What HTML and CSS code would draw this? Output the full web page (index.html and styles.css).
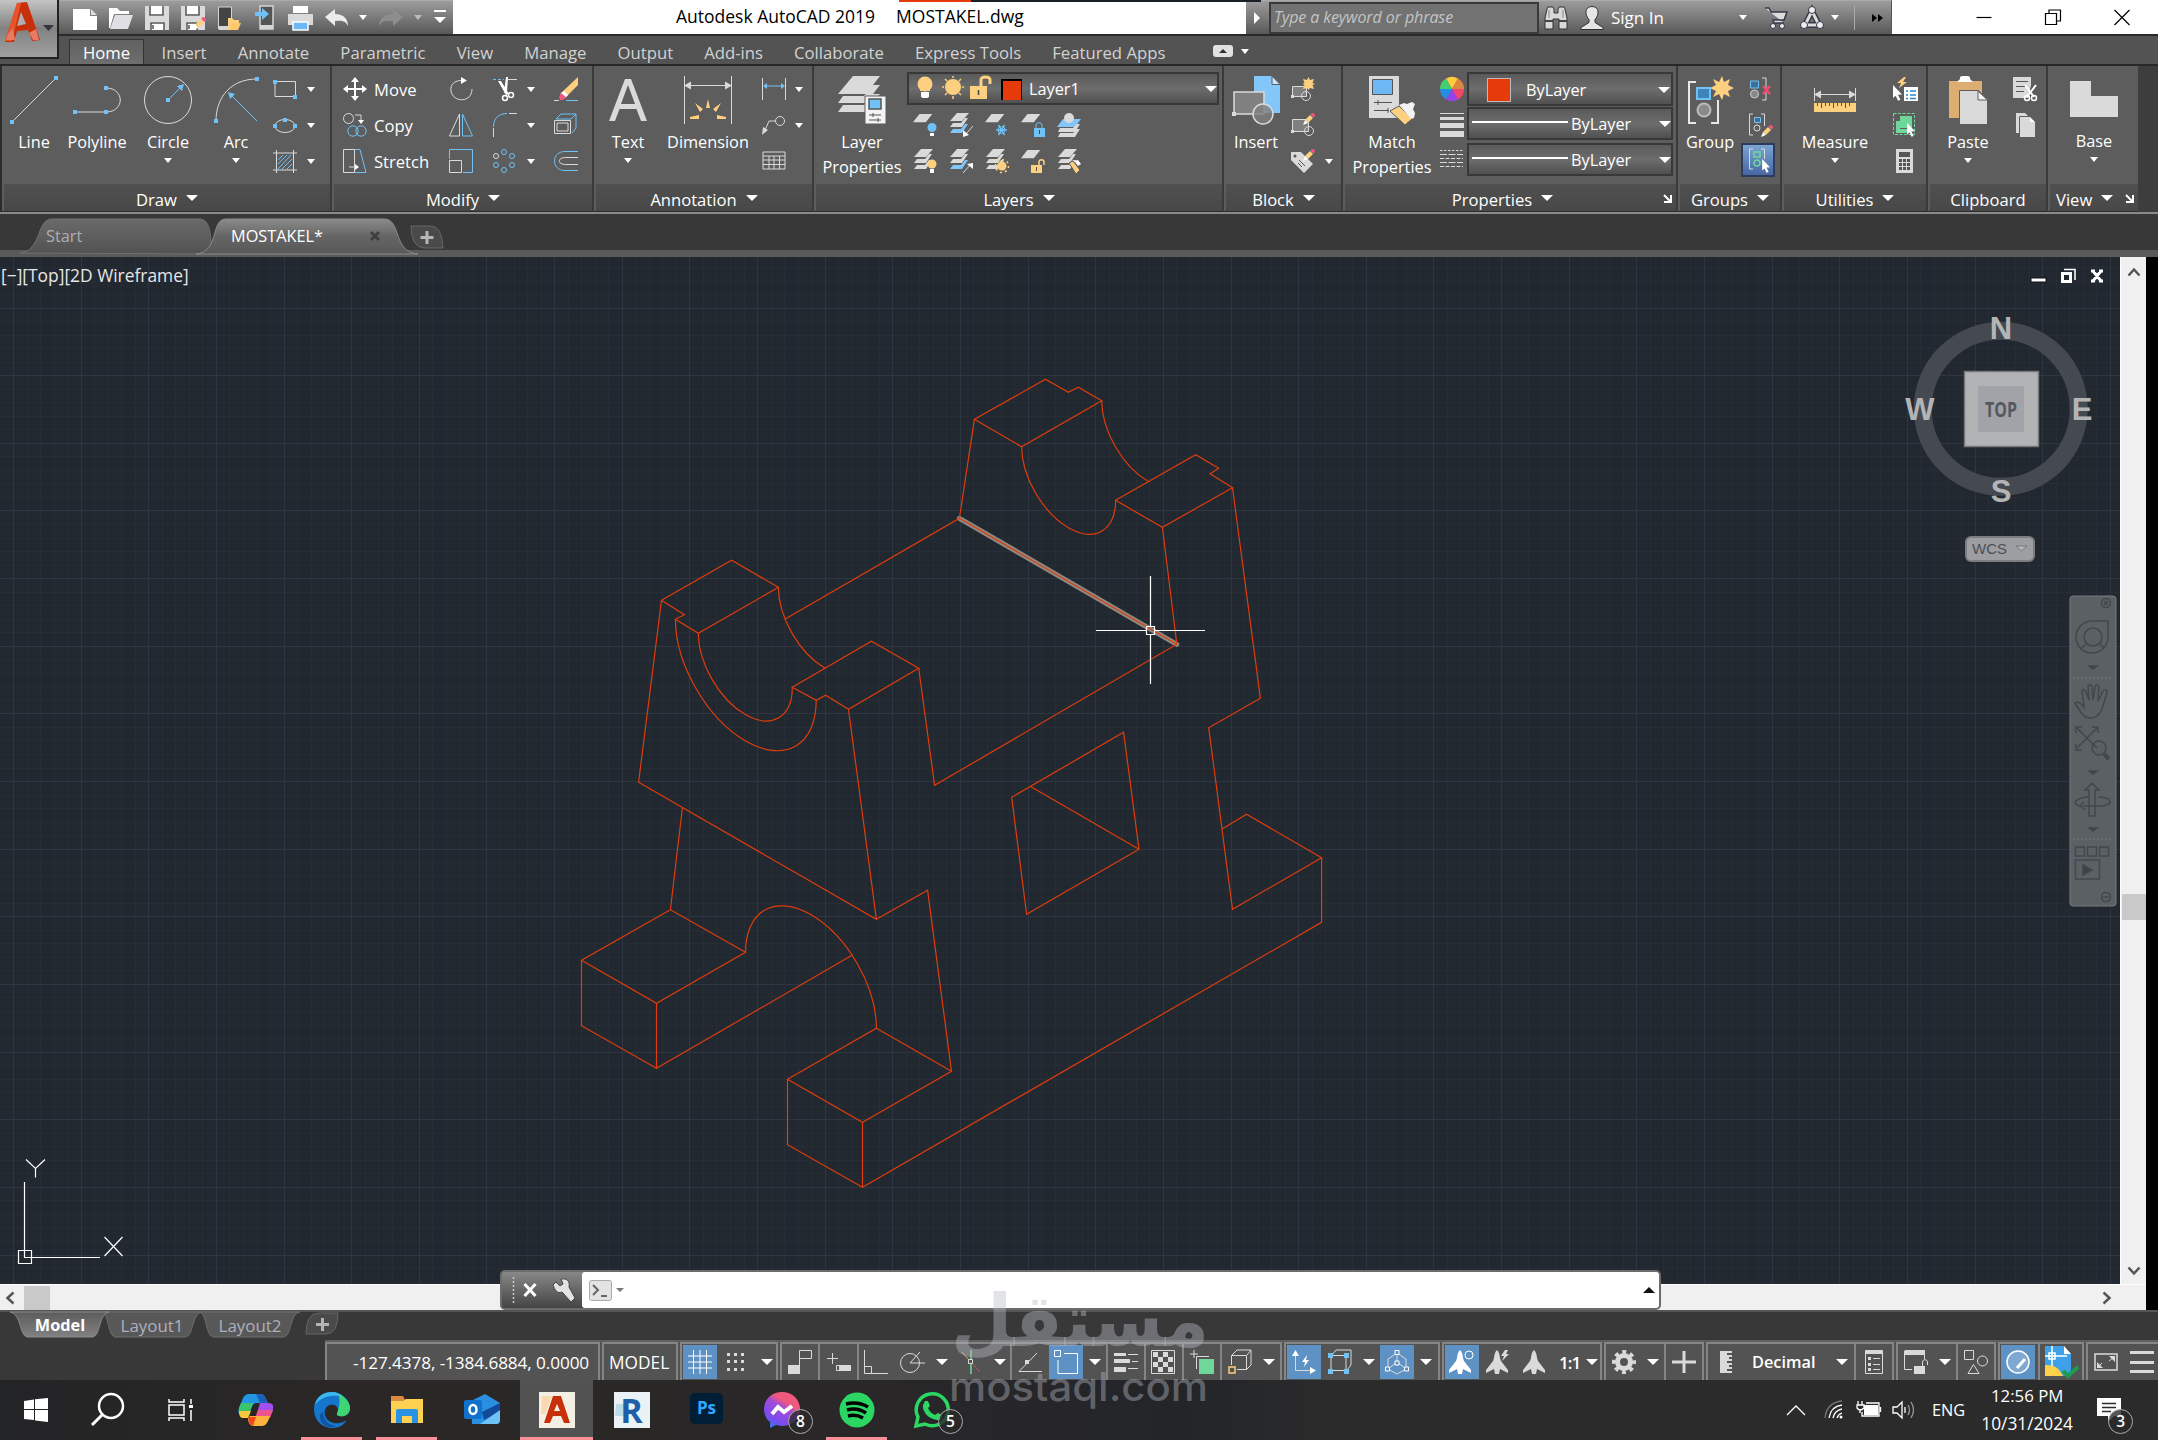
FILE: index.html
```html
<!DOCTYPE html>
<html lang="en">
<head>
    <meta charset="utf-8">
    <title>Autodesk AutoCAD 2019 - MOSTAKEL.dwg</title>
    <link rel="stylesheet" href="styles.css">
</head>
<body>

<!-- shared icon parts -->
<svg width="0" height="0" class="defs">
    <symbol id="slab" viewBox="0 0 24 24"><path fill="#dadada" d="M7 0h14l-7 9H0z"/></symbol>
    <symbol id="slabs" viewBox="0 0 24 24">
        <path fill="#dadada" d="M8 0h12l-7 8H1zM16 5h3l-6 9H1l3-4h8zM16 11h3l-6 9H1l3-4h8z"/>
    </symbol>
    <symbol id="slabsblue" viewBox="0 0 24 24">
        <path fill="#dadada" d="M8 0h12l-7 8H1zM16 5h3l-6 9H1l3-4h8z"/><path fill="#83c6fa" d="M16 11h3l-6 9H1l3-4h8z"/>
    </symbol>
    <symbol id="pencil" viewBox="0 0 12 12">
        <path fill="#fdd07f" d="M2 7l5-5 3 3-5 5z"/><path fill="#f0587e" d="M7.500 1.500L9 0q3 0 3 3l-1.500 1.500z"/><path fill="#fff" d="M2 7L0 12l5-2z"/>
    </symbol>
    <symbol id="pointer" viewBox="0 0 10 16"><path fill="#fff" d="M0 0l9 9.500-4 .3 2.400 5-2.400 1-2.300-5L0 13z"/></symbol>
    <symbol id="person" viewBox="0 0 22 24"><path d="M11 0c2 2 2.500 4 3 8l1 3 7 9v3l-6-3-2-1-1 5h-4l-1-5-2 1-6 3v-3l7-9 1-3c.5-4 1-6 3-8z"/></symbol>
    <linearGradient id="tabOn" x1="0" y1="0" x2="0" y2="1"><stop offset="0" stop-color="#8b8b8b"/><stop offset=".5" stop-color="#656565"/><stop offset="1" stop-color="#585858"/></linearGradient>
    <linearGradient id="tabOff" x1="0" y1="0" x2="0" y2="1"><stop offset="0" stop-color="#6a6a6a"/><stop offset="1" stop-color="#525252"/></linearGradient>
    <linearGradient id="tabUp" x1="0" y1="0" x2="0" y2="1"><stop offset="0" stop-color="#5c5c5c"/><stop offset="1" stop-color="#818181"/></linearGradient>
</svg>

<div class="app">

    <header class="titlebar">
        <div class="quick">
            <svg class="q-new" width="24" height="24"><path fill="#fff" d="M0 3h17v7h7v14H0z"/><path fill="#ddd" d="M18 3l6 6h-6z"/></svg>
            <svg class="q-open" width="24" height="24"><path fill="#fff" d="M0 2h8l3 3h9v3H5L1 22H0z"/><path fill="#e0e0e4" d="M6 9h18l-5 14H1z"/></svg>
            <svg class="q-save" width="24" height="26"><path fill="#dadada" d="M0 1h24v24H0z"/><path fill="#fff" d="M5 1h13v10H5zM6 17h13v8H6z"/><path stroke="#555" stroke-width="1.500" fill="none" d="M5 1v9h13V1M6 25v-7h13v7M8 20v4"/></svg>
            <svg class="q-saveas" width="25" height="26"><path fill="#dadada" d="M0 1h24v24H0z"/><path fill="#fff" d="M5 1h13v10H5zM6 17h10v8H6z"/><path stroke="#555" stroke-width="1.500" fill="none" d="M5 1v9h13V1M6 25v-7h10v7M8 20v4"/><use href="#pencil" x="12" y="12" width="13" height="13"/></svg>
            <svg class="q-mob" width="24" height="26"><path fill="#444" stroke="#d5d5d5" d="M.5 2h13v22H.5z"/><path fill="#d5d5d5" d="M1 21h13v4H1z"/><path fill="#fdd07f" d="M10 13h4l2 2h5v3h-7l-3 7h-1z"/><path fill="#fdc86c" d="M14 18h9l-3 7h-9z"/></svg>
            <svg class="q-mob2" width="20" height="26"><path fill="#555" stroke="#d5d5d5" stroke-width="1.500" d="M5 1h13v23H5z"/><path fill="#d5d5d5" d="M5 20h13v4H5z"/><path fill="#6fc1f6" d="M0 7h7V3l7 6-7 6v-4H0z"/></svg>
            <svg class="q-print" width="25" height="26"><path fill="#fff" d="M5 1h15v7H5z"/><path fill="#dadada" d="M0 9h25v11H0z"/><path fill="#6fb8f6" stroke="#fff" stroke-width="1.500" d="M5 17h15v8H5z"/></svg>
            <svg class="q-undo" width="24" height="20"><path fill="#ececec" d="M0 9l10-8v5c9 0 13 5 13 12-2-5-6-6-13-5v5z"/></svg>
            <i class="caret sm"></i>
            <svg class="q-redo" width="24" height="20"><path fill="#8e8e8e" d="M24 9L14 1v5C5 6 0 11 0 18c2-5 7-6 14-5v5z"/></svg>
            <i class="caret sm dim"></i>
            <i class="caret bar"></i>
        </div>
        <div class="wintitle"><span>Autodesk AutoCAD 2019</span><span>MOSTAKEL.dwg</span></div>
        <div class="infocenter">
            <i class="tri-right"></i>
            <div class="search">Type a keyword or phrase</div>
            <svg class="i-bin" width="24" height="24"><path fill="#d8d8d8" stroke="#333" d="M3 3l1-2h5l1 2v4h4V3l1-2h5l1 2 2 9v11h-8V13h-6v10H1V12z"/><path stroke="#444" stroke-width="2" d="M1 15h8M15 15h8"/><path stroke="#888" d="M5 4v8M19 4v8"/></svg>
            <svg class="i-user" width="24" height="24"><path fill="#e6e6e6" stroke="#333" d="M12 .500c8 0 7 9 3 13v3l8 5v2H1v-2l8-5v-3c-4-4-5-13 3-13z"/></svg>
            <span class="signin">Sign In</span>
            <i class="caret sm c1"></i>
            <svg class="i-cart" width="24" height="24"><path fill="#ddd" stroke="#34384a" stroke-width="1.500" d="M1 2h4l2 4h16l-3 8H9l1 3h10"/><circle cx="9" cy="20" r="2.500" fill="#eee" stroke="#34384a"/><circle cx="18" cy="20" r="2.500" fill="#eee" stroke="#34384a"/></svg>
            <svg class="i-a360" width="24" height="24"><path fill="none" stroke="#34384a" stroke-width="6" d="M12 5L5 19h14z"/><path fill="none" stroke="#ddd" stroke-width="3" d="M12 5L5 19h14z"/><g fill="#eee" stroke="#34384a"><circle cx="12" cy="4" r="3.500"/><circle cx="4" cy="19" r="3.500"/><circle cx="20" cy="19" r="3.500"/></g></svg>
            <i class="caret sm"></i>
            <b class="vline"></b>
            <svg class="i-more" width="12" height="10"><path d="M0 1l5 4-5 4zM6 1l5 4-5 4z"/></svg>
        </div>
        <div class="winbtns">
            <svg width="16" height="16"><path d="M.5 8.500h15"/></svg>
            <svg width="16" height="16"><path d="M.5 4.500h11v11H.5zM4 4V1h11.500v11H12"/></svg>
            <svg width="16" height="16"><path d="M.5 1l15 15M15.500 1L.5 16"/></svg>
        </div>
        <div class="topstrip"></div>
        <div class="appbtn">
            <svg width="58" height="58"><path fill="#c8300c" d="M17 3l10-1 13 38-8 1-4-11-11 1-3 11H5z"/><path fill="#e8542a" d="M17 3l4 0-9 38H5z"/><path fill="#aeb0b2" d="M21 12l5 12-9 2z"/><path fill="#e77a62" d="M8 34l5-6 2 12H6zM29 33l7-4 3 11h-6z"/><path fill="#33363c" d="M43 25h11l-5.500 6z"/></svg>
        </div>
    </header>

    <nav class="menutabs">
        <a class="on">Home</a><a>Insert</a><a>Annotate</a><a>Parametric</a><a>View</a><a>Manage</a><a>Output</a><a>Add-ins</a><a>Collaborate</a><a>Express Tools</a><a>Featured Apps</a>
        <span class="minbtn"></span><i class="caret sm"></i>
    </nav>

    <section class="ribbon">
        <div class="panel p-draw">
            <div class="body">
                <div class="tool t-line"><svg width="48" height="48"><path class="g" d="M2 46L46 2"/><path class="bf" d="M0 44h4v4H0zM44 0h4v4h-4z"/></svg><span>Line</span></div>
                <div class="tool t-poly"><svg width="48" height="48"><path class="g" d="M2 36h31M33 12c19 0 19 24 0 24"/><path class="bf" d="M0 34h4v4H0zM31 34h4v4h-4zM31 10h4v4h-4z"/></svg><span>Polyline</span></div>
                <div class="tool t-circle"><svg width="48" height="48"><circle class="g" cx="24" cy="24" r="23.500"/><path class="b" d="M24 24l13-13"/><path class="bf" d="M22 22h4v4h-4zM40 8l-2 7-5-5z"/></svg><span>Circle</span><i class="caret sm"></i></div>
                <div class="tool t-arc"><svg width="48" height="48"><path class="g" d="M4 45C4 20 20 3 45 3"/><path class="b" d="M18 18l27 27"/><path class="bf" d="M2 43h4v4H2zM43 1h4v4h-4zM16 16l7 2-5 5z"/></svg><span>Arc</span><i class="caret sm"></i></div>
                <div class="col t-dcol">
                    <div><svg width="24" height="24"><path class="g" d="M2 4.500h20.500v15H2z"/><path class="bf" d="M0 3h4v4H0zM20 18h4v4h-4z"/></svg><i class="caret sm"></i></div>
                    <div><svg width="24" height="24"><ellipse class="g" cx="12" cy="13" rx="10" ry="6.500"/><path class="bf" d="M10 5h4v4h-4zM0 11h4v4H0zM20 11h4v4h-4z"/></svg><i class="caret sm"></i></div>
                    <div><svg width="24" height="24"><path class="g" d="M0 4h24M0 21h24M3.500 1v23M20.500 1v23"/><path class="b" d="M5 11l5-5M5 15l9-9M5 20L18 6M9 20l10-10M14 20l5-5"/></svg><i class="caret sm"></i></div>
                </div>
            </div>
            <div class="ptitle">Draw<i class="caret"></i></div>
        </div>

        <div class="panel p-modify">
            <div class="body">
                <div class="col t-move">
                    <div><svg width="24" height="24"><path stroke="#fff" stroke-width="2" d="M12 3v18M3 12h18"/><path fill="#fff" d="M12 0l4 5H8zM12 24l4-5H8zM0 12l5-4v8zM24 12l-5-4v8z"/></svg><span>Move</span></div>
                    <div><svg width="24" height="24"><circle class="g" cx="5.500" cy="5.500" r="5"/><circle class="b" cx="10" cy="18" r="5.200"/><circle class="b" cx="18" cy="18" r="5.200"/><path class="g" d="M12 2h6v7"/><path fill="#fff" d="M15 7h6l-3 4z"/></svg><span>Copy</span></div>
                    <div><svg width="24" height="24"><path class="g" d="M.5.500h11v23H.500zM6 18h8"/><path class="b" d="M12 .5h5l6 23H12"/><path fill="#fff" d="M12 15l4 3-4 3z"/></svg><span>Stretch</span></div>
                </div>
                <div class="col">
                    <div><svg width="24" height="24"><path class="g" d="M14 3.500C5 3 1 8 2 14c2 12 21 12 21-2"/><path fill="#fff" d="M12 0l6 3.500-6 3.500z"/></svg></div>
                    <div><svg width="24" height="24"><path class="g" d="M10.500 1v22H.5z"/><path class="b" d="M13.500 1v22h10z"/></svg></div>
                    <div><svg width="24" height="24"><path class="b" d="M.5 10V.5h23v23H14"/><path class="g" d="M.5 11.500h12v12H.5z"/></svg></div>
                </div>
                <div class="col t-mcol">
                    <div><svg width="24" height="24"><path class="b" stroke-dasharray="3 2" d="M0 2.500h11"/><path class="g" d="M15 2.500h9"/><path fill="#fff" d="M5 4l3 0 8 13-3 1zM13 0h2l-1 15-3 1z"/><circle cx="12" cy="21" r="2.500" fill="none" stroke="#fff" stroke-width="1.500"/><circle cx="18" cy="18" r="2.500" fill="none" stroke="#fff" stroke-width="1.500"/></svg><i class="caret sm"></i></div>
                    <div><svg width="24" height="24"><path class="b" d="M.5 14C.5 5 6 .5 14 .5"/><path class="g" d="M.5 15v9M16 .5h8"/></svg><i class="caret sm"></i></div>
                    <div><svg width="24" height="24"><g class="b"><circle cx="11" cy="3" r="2.500"/><circle cx="19" cy="7" r="2.500"/><circle cx="19" cy="16" r="2.500"/><circle cx="11" cy="21" r="2.500"/><circle cx="3" cy="16" r="2.500"/></g><circle class="g" cx="3" cy="7" r="2.500"/></svg><i class="caret sm"></i></div>
                </div>
                <div class="col t-mcol2">
                    <div><svg width="24" height="24"><path fill="#fdd07f" d="M24 0v8L12 20l-5-4z"/><path fill="#fff" d="M10 14l4 4-3 3-5-4z"/><path fill="#f0587e" d="M7 16l5 4-3 3H6l-1-3z"/><path class="g" d="M0 23.500h5"/><path class="b" d="M12 23.500h12"/></svg></div>
                    <div><svg width="24" height="24"><path class="b" d="M2 6l5-5h15l-5 5M22 1v14l-4 5M17 6h-15"/><path class="g" d="M.500 7.500h16v13H.5zM3 10h11v8H3z"/></svg></div>
                    <div><svg width="24" height="24"><path class="b" d="M24 2.500H11C-3 2.500-3 21.500 11 21.500h13"/><path class="g" d="M24 8.500H12c-9 0-9 7 0 7h12"/></svg></div>
                </div>
            </div>
            <div class="ptitle">Modify<i class="caret"></i></div>
        </div>

        <div class="panel p-annot">
            <div class="body">
                <div class="tool t-text"><svg width="48" height="48"><path fill="#dadada" d="M21 3h6l16 42h-6l-4.500-12h-17L11 45H5zM24 9l-7 19h14z"/></svg><span>Text</span><i class="caret sm"></i></div>
                <div class="tool t-dim"><svg width="48" height="48"><path class="g" d="M.5 0v48M47.500 0v48M4 9.500h40"/><path fill="#dadada" d="M0 9.500l7-4v8zM48 9.500l-7-4v8z"/><path fill="#fdd07f" d="M24 23l2 9h-4zM11 27l8 6-3 3zM37 27l-8 6 3 3zM6 41l9-2v4H6zM42 41l-9-2v4h9z"/></svg><span>Dimension</span></div>
                <div class="col t-acol">
                    <div><svg width="24" height="24"><path class="g" d="M.5 1v22M23.500 1v22"/><path class="b" d="M3 9h18"/><path class="bf" d="M1 9l4-3v6zM23 9l-4-3v6z"/></svg><i class="caret sm"></i></div>
                    <div><svg width="24" height="24"><circle class="g" cx="18" cy="8" r="4.500"/><path class="g" d="M13 8H7L3 17"/><path fill="#dadada" d="M0 22l1-8 5 3z"/></svg><i class="caret sm"></i></div>
                    <div><svg width="24" height="24"><path class="g" d="M1 3h22v17H1zM1 7h22M1 11h22M1 15.500h22M7 7v13M12 7v13M17.500 7v13"/></svg></div>
                </div>
            </div>
            <div class="ptitle">Annotation<i class="caret"></i></div>
        </div>

        <div class="panel p-layers">
            <div class="body">
                <div class="tool t-lprop"><svg width="48" height="48"><path fill="#dadada" d="M15 0h27L28 18H0zM35 9h7L28 27H0l5-7h21zM35 18h7L28 36H0l5-7h21z"/><path fill="#f3f3f3" stroke="#5d5d5d" d="M27 20h21v28H27z"/><path fill="#6fc1f6" stroke="#555" stroke-width="1.500" d="M31 23h12v10H31z"/><path stroke="#555" d="M31 39h12M31 44h12M35 37v4M40 42v4"/></svg><span>Layer<br>Properties</span></div>
                <div class="layerbox">
                    <div class="combo layercombo">
                        <svg width="76" height="24"><circle cx="9" cy="8" r="7.500" fill="#fdd07f"/><path fill="#fdd07f" d="M4 12h10v3H4z"/><path fill="#fff" d="M5 16h8v5l-2 1H7l-2-1z"/><circle cx="37" cy="11" r="8" fill="#fdd07f"/><path stroke="#fdd07f" stroke-width="1.500" d="M37 0v2M37 20v3M26 11h2M46 11h2M29 3l2 2M43 17l2 2M29 19l2-2M43 5l2-2"/><path fill="#fdd07f" d="M54 10h17v13H54z"/><path fill="none" stroke="#fdd07f" stroke-width="3" d="M65 10V4c0-4 9-4 9 0v4"/><path stroke="#444" stroke-width="1.500" d="M62.500 14v5"/></svg>
                        <b class="swatch"></b><span>Layer1</span><i class="caret"></i>
                    </div>
                    <div class="icongrid">
                        <svg width="24" height="24"><use href="#slab" x="0" y="1" width="22" height="22"/><circle cx="19" cy="14.500" r="4.500" fill="#6fc1f6"/><path fill="#fff" d="M17 20h4v3h-4z"/></svg>
                        <svg width="24" height="24"><use href="#slabsblue" width="24" height="24"/><path class="g" d="M24 13l-7 8"/><path fill="#fff" d="M14 24v-7l6 5z"/></svg>
                        <svg width="24" height="24"><use href="#slab" x="0" y="1" width="22" height="22"/><path class="b" stroke-width="1.500" d="M11 17h11M13.500 12l6 10M19.500 12l-6 10"/><circle class="b" cx="16.500" cy="17" r="3.500"/></svg>
                        <svg width="24" height="24"><use href="#slab" x="0" y="1" width="22" height="22"/><path class="bf" d="M13 15h11v9H13z"/><path class="b" d="M15 15v-3c0-3 6-3 6 0v3"/><path stroke="#444" d="M18.500 17v4"/></svg>
                        <svg width="24" height="24"><path fill="#83c6fa" d="M6 6h18l-6 8H0z"/><path fill="#dadada" d="M20 11h3l-5 8H1l2-4h13zM20 16h3l-5 8H1l2-4h13z"/><circle cx="12" cy="5" r="5" fill="#dadada"/></svg>
                        <svg width="24" height="24"><use href="#slabs" width="24" height="24"/><circle cx="19" cy="15" r="4.500" fill="#fdd07f"/><path fill="#fff" d="M17 20h4v4h-4z"/></svg>
                        <svg width="24" height="24"><use href="#slabsblue" width="24" height="24"/><path class="g" d="M14 24l7-8"/><path fill="#fff" d="M24 14v6l-6-5z"/></svg>
                        <svg width="24" height="24"><use href="#slabs" width="24" height="24"/><circle cx="17" cy="17" r="4.500" fill="#fdd07f"/><circle cx="17" cy="17" r="6.500" fill="none" stroke="#fdd07f" stroke-width="1.500" stroke-dasharray="2 3"/></svg>
                        <svg width="24" height="24"><use href="#slab" x="0" y="1" width="22" height="22"/><path fill="#fdd07f" d="M10 16h11v8H10z"/><path fill="none" stroke="#fdd07f" stroke-width="1.500" d="M18 16v-3c0-3 5-3 5 0v3"/><path stroke="#555" d="M15.500 18v4"/></svg>
                        <svg width="24" height="24"><use href="#slabs" width="24" height="24"/><path fill="#fdd07f" stroke="#5d5d5d" d="M12 14l4-2 7 9-4 4z"/><path fill="#fff" d="M17 12l4-1 3 4-3 2z"/></svg>
                    </div>
                </div>
            </div>
            <div class="ptitle">Layers<i class="caret"></i></div>
        </div>

        <div class="panel p-block">
            <div class="body">
                <div class="tool t-ins"><svg width="48" height="48"><path fill="#83c6fa" d="M22 0h18l8 8v29H22z"/><path fill="#c9e6fc" stroke="#5d5d5d" d="M40 0v8.500h8z"/><path fill="#808080" stroke="#dadada" stroke-width="1.500" d="M2 16h30v22H2z"/><circle cx="31" cy="38" r="10" fill="#808080" fill-opacity=".8" stroke="#dadada" stroke-width="1.500"/><path fill="#dadada" d="M0 36h4v4H0z"/></svg><span>Insert</span></div>
                <div class="col t-bcol">
                    <div><svg width="24" height="24"><path fill="#808080" stroke="#dadada" d="M1.500 9.500h14v10h-14z"/><circle class="g" cx="15" cy="19" r="4.500"/><path fill="#dadada" d="M0 18h3v3H0z"/><path fill="#fdd07f" d="M17.500 0l1.500 3 4-1-1.500 4 2.500 1-2.500 1 1.500 4-4-1-1.500 2-1.500-2-4 1 1.500-4-2-1 2-1-1.500-4 4 1z"/></svg></div>
                    <div><svg width="24" height="24"><path fill="#808080" stroke="#dadada" d="M1.500 6.500h16v12h-16z"/><circle class="g" cx="18" cy="18" r="4.500"/><path fill="#dadada" d="M0 17h3v3H0z"/><use href="#pencil" x="12" y="0" width="12" height="12"/></svg></div>
                    <div><svg width="24" height="24"><path fill="#dadada" d="M0 3h10l12 12-9 9L0 11z"/><circle cx="4" cy="7" r="1.500" fill="#555"/><path stroke="#555" d="M8 11l6 6M7 14l4 4"/><use href="#pencil" x="12" y="0" width="12" height="12"/></svg><i class="caret sm"></i></div>
                </div>
            </div>
            <div class="ptitle">Block<i class="caret"></i></div>
        </div>

        <div class="panel p-props">
            <div class="body">
                <div class="tool t-match"><svg width="48" height="48"><path fill="#dadada" d="M1 0h30v42H1z"/><path fill="#6fb8f6" stroke="#555" d="M4.500 3.500h20v15h-20z"/><path stroke="#555" d="M6 26.500h18M6 34.500h15M10 24v5M20 32v5"/><path fill="#fdd07f" stroke="#5d5d5d" d="M22 35l9-5 13 13-7 6z"/><path fill="#f3f3f3" d="M31 29l5-2 3 1 5-2 3 2-2 5 2 4-1 5-3 1z"/></svg><span>Match<br>Properties</span></div>
                <div class="col t-pcol">
                    <div><svg width="24" height="24"><circle cx="12" cy="12" r="12" fill="#f25"/><path fill="#ffcb3f" d="M12 12L6 1.600a12 12 0 0 1 12 0z"/><path fill="#d98a40" d="M12 12l6-10.400A12 12 0 0 1 24 12z"/><path fill="#f0486c" d="M12 12h12a12 12 0 0 1-6 10.400z"/><path fill="#8f45e8" d="M12 12l6 10.400a12 12 0 0 1-12 0z"/><path fill="#2090e0" d="M12 12L6 22.400A12 12 0 0 1 0 12z"/><path fill="#3fd070" d="M12 12H0A12 12 0 0 1 6 1.600z"/></svg></div>
                    <div><svg width="24" height="24"><path fill="#dadada" d="M0 0h24v1H0zM0 4h24v3H0zM0 10h24v5H0zM0 18h24v6H0z"/></svg></div>
                    <div><svg width="24" height="24"><path class="g" stroke-dasharray="2.500 1.500" d="M0 1.500h23"/><path class="g" stroke-dasharray="7 1.500" d="M0 5.500h23M0 13.500h23"/><path class="g" stroke-dasharray="4 1.500" d="M0 9.500h23M0 17.500h23"/></svg></div>
                </div>
                <div class="combos">
                    <div class="combo c-color"><b class="swatch2"></b><span>ByLayer</span><i class="caret"></i></div>
                    <div class="combo c-line"><b class="hline"></b><span>ByLayer</span><i class="caret"></i></div>
                    <div class="combo c-line"><b class="hline"></b><span>ByLayer</span><i class="caret"></i></div>
                </div>
            </div>
            <div class="ptitle">Properties<i class="caret"></i><svg class="launch" width="9" height="9"><path d="M1 1l6 6M8 1v7H1"/></svg></div>
        </div>

        <div class="panel p-groups">
            <div class="body">
                <div class="tool t-group"><svg width="48" height="48"><path fill="none" stroke="#e8e8e8" stroke-width="2" d="M9 6H2v41h7M24 47h7V24"/><path fill="#3f83bd" stroke="#6fc1f6" stroke-width="2" d="M10 12h13v11H10z"/><circle cx="17" cy="34" r="6.500" fill="#8a8a8a" stroke="#bbb" stroke-width="2"/><path fill="#fdd07f" d="M35 0l2 6 6-3-2 6 6 3-6 3 2 6-6-3-2 6-3-6-6 3 3-6-6-3 6-3-3-6 6 3z"/></svg><span>Group</span></div>
                <div class="col t-gcol">
                    <div><svg width="24" height="24"><path fill="#3d6f98" stroke="#6fc1f6" d="M1.500 4h8v7h-8z"/><circle cx="5.500" cy="17" r="4" fill="#888" stroke="#ccc"/><path class="g" d="M13 1h4v22h-4"/><path stroke="#f0486c" stroke-width="2.500" d="M14 9l7 8M21 9l-7 8"/></svg></div>
                    <div><svg width="28" height="24"><path class="g" d="M4 1H.500v21H4M12 1h3.500v12"/><path fill="#3d6f98" stroke="#6fc1f6" d="M5.500 4.500h6v5h-6z"/><circle class="g" cx="8" cy="15" r="3"/><use href="#pencil" x="12" y="12" width="12" height="12"/></svg></div>
                    <div class="hot"><svg width="24" height="24"><path class="g" stroke="#fff" d="M4 1H.5v20H4M12 1h3.500v10"/><path fill="none" stroke="#6fd79a" stroke-width="1.500" d="M5 4h6v5H5z"/><circle cx="8" cy="15" r="3" fill="none" stroke="#6fd79a" stroke-width="1.500"/><use href="#pointer" x="13" y="11" width="9" height="14"/></svg></div>
                </div>
            </div>
            <div class="ptitle">Groups<i class="caret"></i></div>
        </div>

        <div class="panel p-utils">
            <div class="body">
                <div class="tool t-meas"><svg width="48" height="48"><path class="g" d="M3.500 12v13M44.500 12v13M6 18.500h36"/><path fill="#dadada" d="M3 18.500l7-4v8zM45 18.500l-7-4v8z"/><path fill="#fdd07f" d="M3 27h42v9H3z"/><path stroke="#555" d="M6.500 27v3M10.500 27v5M14.500 27v3M18.500 27v3M22.500 27v5M26.500 27v3M30.500 27v3M34.500 27v5M38.500 27v3"/></svg><span>Measure</span><i class="caret sm"></i></div>
                <div class="col">
                    <div><svg width="25" height="24"><path fill="#fdd07f" d="M11 0L4 6h4l-2 5 8-6h-4l3-5z"/><path fill="#fff" d="M11 10h14v14H11z"/><path stroke="#2a86d0" stroke-width="1.500" d="M13 14h2M17 14h6M13 18h2M17 18h6M13 21.500h2M17 21.500h6"/><use href="#pointer" x="0" y="8" width="10" height="16"/></svg></div>
                    <div><svg width="24" height="24"><path fill="none" stroke="#6fd79a" stroke-dasharray="3 1.500" d="M.5.500h21v21h-21z"/><path fill="#6fd79a" d="M3 8h4v8h9v4H3zM7 3h12v12H7z"/><use href="#pointer" x="14" y="10" width="9" height="14"/></svg></div>
                    <div><svg width="24" height="24"><path fill="#dadada" d="M3 0h17v24H3z"/><path fill="#555" d="M6 3h11v5H6zM6 10h3v3H6zM10 10h3v3h-3zM14 10h3v3h-3zM6 14h3v3H6zM10 14h3v3h-3zM14 14h3v3h-3zM6 18h3v3H6zM10 18h3v3h-3zM14 18h3v3h-3z"/></svg></div>
                </div>
            </div>
            <div class="ptitle">Utilities<i class="caret"></i></div>
        </div>

        <div class="panel p-clip">
            <div class="body">
                <div class="tool t-paste"><svg width="48" height="48"><path fill="#dcae72" d="M5 5h33v37H5z"/><path fill="#fff" d="M13 6l3-3V1l2-1h6l2 1v2l3 3z"/><path fill="#dadada" stroke="#5d5d5d" d="M15.500 14.500h19l9 9v25h-28z"/><path fill="#f3f3f3" stroke="#5d5d5d" d="M34 15v9h9.500z"/></svg><span>Paste</span><i class="caret sm"></i></div>
                <div class="col">
                    <div><svg width="24" height="24"><path fill="#dadada" d="M0 0h18v8l-3 13H0z"/><path stroke="#555" d="M3 4.500h12M3 9.500h9M3 14.500h8"/><path stroke="#fff" stroke-width="2" d="M12 8l9 12M23 8l-9 12"/><circle cx="14" cy="21" r="2.500" fill="none" stroke="#fff" stroke-width="1.500"/><circle cx="21" cy="21" r="2.500" fill="none" stroke="#fff" stroke-width="1.500"/></svg></div>
                    <div><svg width="24" height="24"><path fill="#dadada" d="M3 0h9l4 4v16H3z"/><path fill="#dadada" stroke="#5d5d5d" d="M6.500 3.500h10l6 6v15h-16z"/><path fill="#fff" d="M17 4v5h5z"/></svg></div>
                </div>
            </div>
            <div class="ptitle">Clipboard</div>
        </div>

        <div class="panel p-view">
            <div class="body">
                <div class="tool t-base"><svg width="48" height="48"><path fill="#dadada" d="M0 5h21v15h27v21H0z"/></svg><span>Base</span><i class="caret sm"></i></div>
            </div>
            <div class="ptitle">View<i class="caret"></i><svg class="launch" width="9" height="9"><path d="M1 1l6 6M8 1v7H1"/></svg></div>
        </div>
    </section>

    <div class="doctabs">
        <div class="dtab off"><svg width="200" height="36"><path fill="url(#tabOff)" stroke="#707070" d="M0 35C22 33 16 1 32 1h148c14 0 10 33 12 35z"/></svg><span>Start</span></div>
        <div class="dtab act"><svg width="232" height="36"><path fill="url(#tabOn)" stroke="#8a8a8a" d="M0 36C24 34 14 1 30 1h158c18 0 8 33 34 35z"/></svg><span>MOSTAKEL*</span><svg class="x" width="12" height="12"><path stroke="#3f3f3f" stroke-width="3" d="M2 2l8 8M10 2l-8 8"/></svg></div>
        <svg class="plus" width="34" height="24"><path fill="#4a4a4a" stroke="#666" d="M1 1h20q11 0 12 22H14Q1 22 1 1z"/><path stroke="#b5b5b5" stroke-width="3" d="M17 6v13M10.500 12.500h13"/></svg>
    </div>

    <main class="work">
        <div class="viewport">
            <svg class="model" width="2120" height="1027" viewBox="0 257 2120 1027">
                <path id="minor" class="minor"/>
                <path id="major" class="major"/>

                <!-- bearing bracket, isometric -->
                <path class="glow" d="M959.400 518.300L1176.800 644.300"/>
                <g class="part">
                    <path d="M974.400 419.300L1045.500 379.300 1068.400 392.300 1078.300 387.300 1101.700 400.700 1021.600 446.700zL959.400 518.300 784.800 619.300"/>
                    <path d="M1021.600 446.700A66 38.100 60 0 0 1115.600 500.300"/>
                    <path d="M1101.700 400.700A66.300 38.300 60 0 0 1148 481.300"/>
                    <path d="M1115.600 500.300L1195.700 454.700 1218.600 468.300 1210.100 473.700 1232.500 487.700 1162.400 527.300zM1162.400 527.300L1176.800 644.300 934.600 785.300 918.700 668.300"/>
                    <path d="M1232.500 487.700L1260.400 698.300 1208.700 727.700 1232.500 909.300 1321.600 857.700 1246.500 814.300 1222.100 829"/>
                    <path d="M959.400 518.300L1176.800 644.300"/>
                    <path d="M661.500 600.300L731.600 560.300 778.400 587.300 698.300 633.300 675.400 619.300 684.400 614.700z"/>
                    <path d="M778.400 587.300A66.300 38.300 60 0 0 825.100 668.300"/>
                    <path d="M698.300 633.300A66 38.100 60 0 0 792.300 687.300"/>
                    <path d="M675.400 619.300A99 57.100 60 0 0 816.200 700.300"/>
                    <path d="M792.300 687.300L871.400 641.300 918.700 668.300 848.500 709.300 825.600 695.300 816.200 700.300z"/>
                    <path d="M661.500 600.300L638.600 782.300 876.400 919.300 848.500 709.300M876.400 919.300L927.600 890.300 951.500 1071.300"/>
                    <path d="M682.400 807.700L670.400 909.700 745.500 952.300 656.500 1003.300 581.500 960.300 670.400 909.700"/>
                    <path d="M581.500 960.300V1025.700L656.500 1068.300V1003.300M656.500 1068.300L852 955.300"/>
                    <path d="M745.500 952.300A92 53.100 60 0 1 876.400 1028.300"/>
                    <path d="M876.400 1028.300L951.500 1071.300 862.500 1122.300 787.500 1079.300zM787.500 1079.300V1144.700L862.500 1187.300V1122.300M862.500 1187.300L1321.600 922.300V857.700"/>
                    <path d="M1011.700 797.300L1123.600 732.300 1139 849.300 1026.600 914.300zM1031 786.700L1139 849.300"/>
                </g>

                <path class="cross" d="M1096 630.500H1146M1155 630.500H1205M1150.500 576V626M1150.500 635V684M1146.500 626.500h8v8h-8z"/>
                <path class="cross" d="M24.500 1182V1257.500H100M18.500 1250.500h13v13h-13zM26 1159.500L35.500 1168.500 45 1159.500M35.500 1168.500V1177.500M104.500 1237L122.500 1256M122.500 1237L104.500 1256"/>

                <!-- view cube -->
                <circle cx="2000.700" cy="408.800" r="78" fill="none" stroke="#454a51" stroke-width="18"/>
                <rect x="1964.500" y="371.500" width="74" height="75" fill="#b2b3b5" stroke="#77787a" stroke-width="1.500"/>
                <rect x="1978" y="386" width="46" height="46" fill="#a1a3a8"/>
                <g class="compass">
                    <text x="2001" y="339">N</text><text x="1920" y="420">W</text><text x="2082" y="420">E</text><text x="2001" y="502">S</text>
                </g>
                <text class="cubetext" x="2001" y="416.500" textLength="32" lengthAdjust="spacingAndGlyphs">TOP</text>
                <rect x="1966" y="537" width="68" height="24" rx="5" fill="#9c9ea2" stroke="#7b7d80" stroke-width="2"/>
                <text class="wcs" x="1972" y="553.500" textLength="35" lengthAdjust="spacingAndGlyphs">WCS</text>
                <path fill="#b5b7ba" stroke="#777" d="M2016 546h11l-5.500 5z"/>

                <!-- navigation bar -->
                <rect x="2070" y="596" width="46" height="310" rx="3" fill="#5b6065" stroke="#777a7d"/>
                <g class="nav">
                    <circle cx="2106" cy="603" r="4.500"/><path d="M2104 601l4 4M2108 601l-4 4"/>
                    <path d="M2093 621h15v16a16 16 0 1 1-15-16z"/><circle cx="2093" cy="637" r="9"/><path d="M2082 648l4-4M2104 648l-4-4"/>
                    <path d="M2075 703c3-2 6 0 9 4l-2-15c0-3 3-3 4 0l3 8-1-13c0-3 4-3 4 0l1 13 2-13c1-3 4-2 4 0l-1 14 5-10c2-2 5-1 4 2l-5 16c-2 6-6 9-12 9s-9-5-15-15z"/>
                    <path d="M2077 728l20 20M2097 728l-20 20M2076 733v-6h6M2092 727h6v6M2076 744v6h6"/><circle cx="2099" cy="748" r="7"/><path stroke-width="4" d="M2104 754l5 5"/>
                    <path d="M2089 816v-26h-4l7-7 7 7h-4v26zM2088 797c-12 1-17 6-9 9M2098 797c14 0 17 8 3 9l-18 0M2084 802l-4 4 5 4"/>
                    <path d="M2075.500 847h9v9h-9zM2087.500 847h9v9h-9zM2099.500 847h9v9h-9zM2075.500 860h24v19h-24z"/>
                    <path fill="#3e4348" d="M2083 865l9 5-9 5zM2089 666h8l-4 3zM2089 771h8l-4 3zM2089 828h8l-4 3z"/>
                    <circle cx="2106" cy="897" r="4.500"/><path d="M2103 897h6"/>
                    <path stroke="#707376" stroke-dasharray="2 2" d="M2073 678h40M2073 839h40"/>
                </g>
            </svg>
            <div class="vlabel">[−][Top][2D Wireframe]</div>
            <div class="docbtns">
                <svg width="18" height="18"><path fill="#fff" stroke="#111" d="M1 11h15v4H1z"/></svg>
                <svg width="18" height="18"><path fill="none" stroke="#fff" stroke-width="3" d="M3.500 6.500h8v8h-8z"/><path fill="none" stroke="#fff" stroke-width="1.500" d="M5 2.500h11V13"/></svg>
                <svg width="18" height="18"><path fill="none" stroke="#fff" stroke-width="3" d="M3 4h4M11 4h4M3 14h4M11 14h4M5 4l8 10M13 4L5 14"/></svg>
            </div>
        </div>
        <div class="vscroll">
            <svg width="14" height="10"><path d="M1.500 8.500l5.500-6 5.500 6"/></svg>
            <b></b>
            <svg width="14" height="10"><path d="M1.500 1.500l5.500 6 5.500-6"/></svg>
        </div>
    </main>

    <div class="hscroll">
        <svg width="10" height="14"><path d="M8.500 1.500l-6 5.500 6 5.500"/></svg>
        <b></b>
        <svg class="right" width="10" height="14"><path d="M1.500 1.500l6 5.500-6 5.500"/></svg>
        <div class="cmd">
            <svg width="80" height="36"><path stroke="#ccc" stroke-dasharray="2 2" stroke-width="1.500" d="M11.500 5v26"/><path stroke="#fff" stroke-width="3" d="M22.500 12l11 12M33.500 12l-11 12"/><path fill="#e2e2e2" stroke="#444" d="M51 13l3-3 4 4 3-2-2-5c7-1 9 3 8 8l6 11-4 4-9-10c-5 2-7-2-9-7z"/></svg>
            <div class="cmdline">
                <svg width="40" height="36"><rect x="7.500" y="8.500" width="22" height="20" rx="2" fill="#e3e3e3" stroke="#aaa"/><path fill="none" stroke="#666" stroke-width="2" d="M11 13l5 5-5 5M19 24h6"/><path fill="#777" d="M34 16h8l-4 4z"/></svg>
                <i class="up"></i>
            </div>
        </div>
    </div>

    <div class="layouttabs">
        <div class="ltab act"><svg width="100" height="26"><path fill="url(#tabUp)" stroke="#8a8a8a" d="M0 0c12 2 9 25 18 25h64c9 0 6-23 17-25z"/></svg><span>Model</span></div>
        <div class="ltab"><svg width="108" height="26"><path fill="#585858" stroke="#6e6e6e" d="M5 0c9 2 6 25 15 25h69c9 0 6-23 17-25z"/></svg><span>Layout1</span></div>
        <div class="ltab"><svg width="108" height="26"><path fill="#585858" stroke="#6e6e6e" d="M5 0c9 2 6 25 15 25h69c9 0 6-23 17-25z"/></svg><span>Layout2</span></div>
        <svg class="plus2" width="34" height="24"><path fill="#4a4a4a" stroke="#666" d="M1 22Q1 1 14 1h19q0 21-12 21z"/><path stroke="#b5b5b5" stroke-width="3" d="M17.500 6v13M11 12.500h13"/></svg>
    </div>

    <div class="status">
        <div class="cell s-coord dbl">-127.4378, -1384.6884, 0.0000</div>
        <div class="cell s-model dbl">MODEL</div>
        <div class="cell s-grid dbl">
            <span class="hl"><svg width="24" height="24"><path stroke="#fff" d="M5.500 0v24M12 0v24M18.500 0v24M0 6h24M0 12h24M0 18h24"/></svg></span>
            <svg width="24" height="24"><path fill="#dadada" d="M3 3h3v3H3zM10 3h3v3h-3zM17 3h3v3h-3zM3 10h3v3H3zM10 10h3v3h-3zM17 10h3v3h-3zM3 18h3v3H3zM10 18h3v3h-3zM17 18h3v3h-3z"/></svg>
            <i class="caret"></i>
        </div>
        <div class="cell s-a"><svg width="24" height="24"><path fill="#dadada" d="M0 15h12v9H0z"/><path class="g" d="M11.500 15V.5h12v8h-12"/></svg></div>
        <div class="cell s-b"><svg width="24" height="24"><path class="g" d="M5.500 3v11M0 8.500h11M9.500 15.500h14v5h-14z"/><path fill="#dadada" d="M12 15h12v6H12z"/></svg></div>
        <div class="cell s-c">
            <svg width="24" height="24"><path class="g" d="M.5 0v23.500H24M1 16.500h6.500v7"/></svg>
            <svg width="26" height="24"><circle class="g" cx="10" cy="13" r="9.500"/><path class="g" d="M10 13h15M10 13L20 2"/></svg><i class="caret"></i>
            <svg width="20" height="24"><path stroke="#6fd79a" stroke-width="1.500" d="M10 0v24"/><path stroke="#e0a060" d="M1 2l8 9"/><path stroke="#d05050" d="M11 13l8 9"/><path fill="#535353" stroke="#dadada" d="M7.500 9.500h4v4h-4z"/></svg><i class="caret"></i>
        </div>
        <div class="cell s-d">
            <svg width="24" height="24"><path class="g" d="M19 3L1 21.500h23"/><path fill="#dadada" d="M7 10h4v4H7z"/></svg>
            <span class="hl"><svg width="24" height="24"><path fill="none" stroke="#fff" d="M10 3.500h13.500v20H4V10M.5.500h6v6h-6z"/></svg></span>
            <i class="caret"></i>
        </div>
        <div class="cell s-e"><svg width="24" height="24"><path fill="#dadada" d="M0 3h12v3H0zM0 9h16v4H0zM0 17h12v5H0zM14 4h10v1H14zM18 11h6v1h-6zM14 18h10v1H14z"/></svg></div>
        <div class="cell s-f"><svg width="24" height="24"><path class="g" d="M.5.500h23v23H.5z"/><path fill="#dadada" d="M2 2h5v5H2zM12 2h5v5h-5zM7 7h5v5H7zM17 7h5v5h-5zM2 12h5v5H2zM12 12h5v5h-5zM7 17h5v5H7zM17 17h5v5h-5z"/></svg></div>
        <div class="cell s-g"><svg width="24" height="24"><path class="g" d="M4 0v8M0 4h8M6.500 19V6.500H19"/><path fill="#6fd79a" d="M9 9h15v15H9z"/></svg></div>
        <div class="cell s-h dbl"><svg width="24" height="24"><path class="g" d="M3.500 15V5.500h15v14H9M4 5l5-5h14v15l-5 5M19 5l4-5"/><path fill="none" stroke="#fdd07f" stroke-width="1.500" d="M1 17h6v6H1z"/></svg><i class="caret"></i></div>
        <div class="cell s-i dbl">
            <span class="hl"><svg width="24" height="24"><path class="g" stroke="#fff" d="M3.500 3v17.500H21"/><path fill="#fff" d="M3.500 0L7 6H0zM24 20.500L18 17v7zM15 5l-5 7h3l-1 5 5-7h-3z"/></svg></span>
            <svg width="24" height="24"><path class="g" d="M3 5.500h15v15H3zM4 5l4-5h15v15l-4 5"/><path class="bf" d="M0 3h5v5H0zM16 3h5v5h-5zM0 19h5v5H0zM16 19h5v5h-5z"/></svg><i class="caret"></i>
            <span class="hl"><svg width="24" height="24"><path class="g" stroke="#fff" d="M12 3l9 6v10l-9 5-9-5V9zM12 12v-9M12 12L3 19M12 12l9 7"/><path fill="#5f92c4" stroke="#fff" d="M10 .5h4v4h-4zM10 11h4v4h-4zM.5 17h4v4h-4zM19.500 17h4v4h-4z"/></svg></span>
            <i class="caret"></i>
        </div>
        <div class="cell s-j dbl">
            <span class="hl"><svg width="26" height="24"><use href="#person" width="22" height="24" fill="#fff"/><circle cx="20" cy="5" r="4" fill="none" stroke="#fff"/></svg></span>
            <svg width="24" height="24"><use href="#person" width="22" height="24" fill="#dadada"/><path fill="#dadada" d="M19 0l-4 6h3l-2 5 7-7h-3l2-4z"/></svg>
            <svg width="22" height="24"><use href="#person" width="22" height="24" fill="#dadada"/></svg>
            <span class="one">1:1</span><i class="caret"></i>
        </div>
        <div class="cell s-k"><svg width="24" height="24"><circle cx="12" cy="12" r="6.500" fill="none" stroke="#dadada" stroke-width="5"/><circle cx="12" cy="12" r="10" fill="none" stroke="#dadada" stroke-width="4" stroke-dasharray="3.900 3.950" stroke-dashoffset="2"/></svg><i class="caret"></i></div>
        <div class="cell s-l dbl"><svg width="24" height="24"><path stroke="#dadada" stroke-width="3" d="M12 1v22M0 12h24"/></svg></div>
        <div class="cell s-m"><svg width="12" height="24"><path fill="#dadada" d="M0 1h12v2H7v2h5v2H9v2h3v2H7v2h5v2H9v2h3v2H7v2h5v2H0z"/></svg><span class="dec">Decimal</span><i class="caret"></i></div>
        <div class="cell s-n dbl"><svg width="18" height="24"><path class="g" d="M.5.500h17v23H.5z"/><path fill="#dadada" d="M1 1h16v3H1zM3 7h3v3H3zM3 13h3v3H3zM3 18h3v3H3zM8 8h7v1H8zM8 14h7v1H8zM8 19h7v1H8z"/></svg></div>
        <div class="cell s-o"><svg width="24" height="24"><path class="g" d="M8 19.500H.5V1h20v8"/><path fill="#dadada" d="M1 0h20v5H1zM10 16h11v8H10z"/><path class="g" d="M18.500 16v-4c0-3 5-3 5 0v3"/></svg><i class="caret"></i></div>
        <div class="cell s-p dbl"><svg width="24" height="24"><path class="g" d="M.5.500h9v9h-9zM9.500 14.500l5.500 9H4z"/><circle class="g" cx="18.500" cy="11" r="5"/></svg></div>
        <div class="cell s-q"><span class="hl"><svg width="24" height="24"><circle cx="12" cy="12" r="11" fill="#7fa9d2" stroke="#fff" stroke-width="1.500"/><path stroke="#fff" stroke-width="3" d="M11 18l8-9"/></svg></span></div>
        <div class="cell s-r dbl"><svg width="36" height="34"><path fill="#3da0e8" d="M0 1h19l7 8v22H0z"/><path fill="#ffd04a" d="M0 20c10 0 14 3 18 11H0z"/><path stroke="#fff" stroke-width="1.500" fill="#3da0e8" d="M7 1v20M0 11h22M4 8h6v6H4z"/><path fill="#fff" d="M19 1l7 8h-7z"/><path fill="none" stroke="#1f9a50" stroke-width="4" d="M18 26l5 5 10-9"/></svg></div>
        <div class="cell s-s"><svg width="24" height="24"><path class="g" stroke-width="1.500" d="M1 4h22v16H1z"/><path fill="#dadada" d="M15 6h6v6zM3 18v-6l6 6z"/><path class="g" d="M15 11l5-4M4 17l4-4"/></svg><svg width="24" height="24"><path fill="#dadada" d="M0 1h24v3H0zM0 11h24v3H0zM0 20h24v3H0z"/></svg></div>
    </div>

    <footer class="taskbar">
        <div class="tk w1"><svg width="24" height="24"><path fill="#fff" d="M0 3l10-1.500V11H0zM11 1.300L24 0v11H11zM0 12h10v10L0 21zM11 12h13v12l-13-1.500z"/></svg></div>
        <div class="tk w1"><svg width="34" height="34"><circle cx="20" cy="13" r="12" fill="none" stroke="#fff" stroke-width="2.500"/><path stroke="#fff" stroke-width="3" d="M11.500 21.500L1 32"/></svg></div>
        <div class="tk w2"><svg width="25" height="24"><path fill="none" stroke="#fff" stroke-width="1.500" d="M1 1v3h15V1M1 7h15v10H1zM1 23v-3h15v3M23 1v5M23 12v11"/><path fill="#fff" d="M21 7h4v3h-4z"/></svg></div>
        <div class="tk w3"><svg width="36" height="34"><path fill="#2196e3" d="M11 1h12q3 0 5 5l2 4H18q-3 0-5 6l-5 8H4q-5-3-3-9L5 5q2-4 6-4z"/><path fill="#1c5fb5" d="M18 1h5q3 0 5 5l2 4H22z"/><path fill="#3bc46d" d="M3 10h12l-4 12H3q-3-3-2-7z"/><path fill="#f6c83c" d="M1 18h12l-3 7H4q-3-1-3-7z"/><path fill="#a24ff0" d="M22 10h9q5 0 4 6l-1 4H19z"/><path fill="#ec5490" d="M20 17h15l-3 8H17z"/><path fill="#ffb13d" d="M12 23h20q-3 10-8 10H14q-4-2-4-8z"/><path fill="#ee4a1c" d="M10 24h8l-3 9q-4 0-5-9z"/></svg></div>
        <div class="tk run"><svg width="36" height="36"><path fill="#1576cc" d="M0 18C0 5 9 0 18 0s18 7 18 16c0 7-6 9-11 8-4-1-1-3-1-6 0-4-4-6-8-5-8 2-7 16 4 18 5 1 10-1 13-3-4 6-9 8-15 8C8 36 0 28 0 18z"/><path fill="#3fb6ee" d="M1 13C3 4 10 0 18 0c5 0 9 2 12 5-8-2-21-3-29 8z"/><path fill="#3dd673" d="M24 2c8 3 12 9 12 14 0 7-6 9-11 8-4-1-1-3-1-6 2-6 2-12 0-16z"/><path fill="#1253a2" d="M9 20c0 7 5 14 14 14-9 4-17-2-17-9 0-3 1-4 3-5z"/></svg></div>
        <div class="tk run"><svg width="32" height="28"><path fill="#d98a40" d="M0 0h12l2 4v5H0z"/><path fill="#ffd152" d="M0 5h12l3-2h17v24H0z"/><path fill="#2793e2" d="M5 27V15q0-2 2-2h18q2 0 2 2v12h-6v-7H11v7z"/></svg></div>
        <div class="tk"><svg width="36" height="32"><path fill="#2a8fe0" d="M7 7L21 0l15 9v16q0 5-4 5H8z"/><path fill="#124a9a" d="M18 18l18-9v9L20 26z"/><path fill="#6ec2f6" d="M36 16v10q0 4-4 4H16z"/><rect y="6" width="18" height="19" rx="2" fill="#1172cc"/><ellipse cx="9" cy="15.500" rx="3.500" ry="4.500" fill="none" stroke="#fff" stroke-width="2.500"/></svg></div>
        <div class="tk cur"><svg width="36" height="36"><path fill="#f4efe4" d="M0 0h36v36H0z"/><path fill="#f8d9b0" d="M3 4h10L6 22H2z"/><path fill="#c8300c" d="M14 4h8l9 27h-6l-3-7h-8l-3 7H5z"/><path fill="#f4efe4" d="M18 12l3 7h-6z"/></svg></div>
        <div class="tk"><svg width="36" height="36"><path fill="#eaf2f5" d="M0 0h36v36H0z"/><path fill="#b9dcea" d="M2 12h10v12H1z"/></svg><b class="rl">R</b></div>
        <div class="tk"><div class="ps">Ps</div></div>
        <div class="tk"><svg width="38" height="38"><defs><linearGradient id="ms" x1="0" y1="1" x2=".6" y2="0"><stop offset="0" stop-color="#108de8"/><stop offset=".3" stop-color="#7b4bf0"/><stop offset=".65" stop-color="#a24bd8"/><stop offset=".8" stop-color="#f0587e"/></linearGradient></defs><path fill="url(#ms)" d="M19 1c10 0 18 7 18 17s-8 17-18 17l-6-1-6 3v-6c-4-3-6-8-6-13C1 8 9 1 19 1z"/><path fill="none" stroke="#fff" stroke-width="4" d="M9 23l6-7 6 5 8-6"/></svg><b class="badge">8</b></div>
        <div class="tk run"><svg width="36" height="36"><circle cx="18" cy="18" r="17.500" fill="#2cd663"/><path fill="none" stroke="#000" stroke-width="3.500" d="M7 12q12-3 22 3M8 18q10-3 19 3M9 24q8-2 15 2"/></svg></div>
        <div class="tk"><svg width="38" height="38"><path fill="none" stroke="#2cd663" stroke-width="3.500" d="M3 35l2-9A16 16 0 1 1 12 33z"/><path fill="#2cd663" d="M12 10l3 0 2 5-2 2q2 5 7 7l3-2 4 2q0 5-5 5C15 28 9 20 10 14z"/></svg><b class="badge">5</b></div>
        <div class="tray">
            <svg class="r1" width="20" height="12"><path d="M1 11l9-9 9 9"/></svg>
            <svg class="r2" width="20" height="20"><path stroke="#777" d="M1 18C2 8 8 2 18 1"/><path d="M5 18c1-7 5-12 13-13M9 18c1-5 4-8 9-9M13 18c1-3 2-4 5-5"/><circle cx="17" cy="17" r="1.500" fill="#fff" stroke="none"/></svg>
            <svg class="r3" width="26" height="20"><path fill="#fff" stroke="none" d="M8 5h14v10H8z"/><path d="M10 3h13v13H6v-4M24.500 7v5M2 1v4M6 1v4M1 5h7v3q-4 4-7 0zM4 9v4"/></svg>
            <svg class="r4" width="24" height="20"><path d="M1 7h4l5-5v16l-5-5H1zM13 7v6"/><path stroke="#999" d="M16 5q3 5 0 10M19 2q5 8 0 16"/></svg>
            <span class="lang">ENG</span>
            <div class="clock"><div>12:56 PM</div><div class="date">10/31/2024</div></div>
            <div class="note"><svg width="24" height="24"><path fill="#fff" stroke="none" d="M0 0h24v18h-7l-6 6v-6H0z"/><path stroke="#2b2b2b" d="M5 5.500h14M5 9.500h14M5 13.500h9"/></svg><b class="badge">3</b></div>
        </div>
    </footer>

    <svg class="watermark" width="280" height="130" viewBox="0 0 280 130">
        <text x="11" y="66" class="ar" textLength="258" lengthAdjust="spacingAndGlyphs">مستقل</text>
        <text x="9" y="121" class="en" textLength="259" lengthAdjust="spacingAndGlyphs">mostaql.com</text>
    </svg>
</div>

<script>
    // drawing grid: 5 minor cells to every major one
    const step = 13.528;
    let minor = '', major = '';
    function add(i, d) {
        if (((i % 5) + 5) % 5 === 0) { major += d; } else { minor += d; }
    }
    for (let i = -1; 13.5 + i * step < 2120; i++) {
        add(i, `M${Math.floor(13.5 + i * step) + 0.5} 257V1284`);
    }
    for (let i = -8; 375.7 + i * step < 1284; i++) {
        add(i, `M0 ${Math.floor(375.7 + i * step) + 0.5}H2120`);
    }
    document.getElementById('minor').setAttribute('d', minor);
    document.getElementById('major').setAttribute('d', major);
</script>
</body>
</html>
```

FILE: styles.css
```css
* { box-sizing: border-box; }
html { height: 1440px; overflow: hidden; }
body { margin: 0; height: 1440px; background: #383838; font-family: "Open Sans", "Noto Sans", sans-serif; font-size: 16.3px; color: #fff; overflow: hidden; }
svg { display: block; flex: none; overflow: visible; }
.defs { position: absolute; }
.app { position: relative; width: 2158px; height: 1440px; display: flex; flex-direction: column; overflow: hidden; }
.app > * { flex: none; }

.g { fill: none; stroke: #dadada; }
.b { fill: none; stroke: #6fc1f6; }
.bf { fill: #6fc1f6; }

.caret { flex: none; width: 0; height: 0; border: 6px solid transparent; border-top-color: #fff; border-bottom: 0; }
.caret.sm { border-width: 4px; border-top-width: 5px; border-bottom: 0; }
.caret.dim { border-top-color: #bbb; }

/* title bar */
.titlebar { position: relative; display: flex; height: 36px; background: #fff; border-bottom: 2px solid #2a2a2a; }
.quick, .infocenter { display: flex; align-items: center; background: linear-gradient(#9c9c9c, #585858); border-top: 1px solid #aaa; }
.quick { width: 453px; padding-left: 73px; }
.q-new, .q-open, .q-save, .q-saveas { margin-right: 12px; }
.q-mob, .q-mob2 { margin-right: 13px; }
.q-print { margin-right: 12px; }
.q-undo { margin-right: 10px; }
.q-redo { margin: 0 11px 0 12px; }
.caret.bar { margin-left: 12px; position: relative; top: 2px; }
.caret.bar::before { content: ""; position: absolute; left: -6px; top: -13px; width: 12px; height: 2px; background: #fff; }
.wintitle { width: 793px; padding-left: 223px; display: flex; gap: 21px; line-height: 33px; font-size: 17.500px; color: #000; white-space: nowrap; }
.infocenter { width: 646px; border-right: 1px solid #555; }
.tri-right { margin: 0 9px 0 8px; width: 6px; border: 6px solid transparent; border-left-color: #fff; border-right: 0; }
.search { width: 270px; height: 32px; border: 2px solid #3a3a3a; background: #727272; color: #c4c4c4; font-style: italic; font-size: 16px; line-height: 27px; padding-left: 3px; letter-spacing: -.1px; white-space: nowrap; }
.i-bin { margin-left: 5px; }
.i-user { margin-left: 12px; }
.signin { margin-left: 7px; font-size: 17px; width: 128px; }
.i-cart { margin: 0 12px 0 17px; }
.i-a360 { margin-right: 7px; }
.vline { width: 1px; height: 25px; background: #aaa; margin-left: 15px; }
.i-more { margin-left: 17px; }
.winbtns { display: flex; align-items: center; padding-left: 84px; gap: 53px; }
.winbtns svg { fill: none; stroke: #000; stroke-width: 1.200; }
.topstrip { position: absolute; left: 899px; top: 0; width: 362px; height: 2px; background: linear-gradient(90deg, #e63a0a 72px, #1b1f26 72px); }
.appbtn { position: absolute; left: 0; top: 0; width: 59px; height: 59px; background: linear-gradient(#c4c4c4, #828282 50%, #a0a0a0); border: 1px solid #222; border-width: 0 2px 2px 0; z-index: 2; }

/* menu tabs */
.menutabs { display: flex; align-items: flex-start; height: 30px; background: #535353; border-bottom: 2px solid #282828; padding: 3px 0 0 69px; color: #d2d2d2; font-size: 16.700px; white-space: nowrap; }
.menutabs a { padding: 2px 15.550px 0; height: 25px; line-height: 24px; }
.menutabs a.on { width: 75px; margin-right: 2px; color: #fff; background: linear-gradient(#616161, #6e6e6e); border: 1px solid #333; border-bottom: 0; padding: 1px 0 0 13px; }
.minbtn { width: 20px; height: 12px; margin: 6px 8px 0 32px; border-radius: 3px; background: #e2e2e2; position: relative; }
.minbtn::after { content: ""; position: absolute; left: 6px; top: 4px; border: 4px solid transparent; border-top: 0; border-bottom-color: #333; }
.menutabs .caret { margin-top: 10px; }

/* ribbon */
.ribbon { display: flex; height: 148px; background: linear-gradient(90deg, #474747, #3d3d3d) #444; border-bottom: 2px solid #8a8a8a; }
.panel { height: 146px; border-right: 2px solid #3a3a3a; background: #5d5d5d; border-bottom: 1px solid #2d2d2d; }
.p-draw { width: 332px; border-left: 2px solid #2c2c2c; }
.p-modify { width: 262px; }
.p-annot { width: 220px; }
.p-layers { width: 410px; }
.p-block { width: 119px; }
.p-props { width: 335px; }
.p-groups { width: 104px; }
.p-utils { width: 146px; }
.p-clip { width: 120px; }
.p-view { width: 90px; border-right: 0; }
.body { display: flex; height: 118px; padding-top: 5px; }
.ptitle { position: relative; height: 27px; margin: 0 0 0 2px; padding-top: 4px; display: flex; align-items: center; justify-content: center; gap: 9px; line-height: 23px; font-size: 16.600px; background: linear-gradient(#505050, #484848); }
.ptitle .caret { margin-top: -4px; }
.launch { position: absolute; right: 4px; top: 10px; fill: none; stroke: #fff; stroke-width: 2; }
.p-view .ptitle { justify-content: flex-start; padding-left: 6px; }
.p-props .ptitle { padding-right: 16px; }

.tool { display: flex; flex-direction: column; align-items: center; padding-top: 5px; }
.tool span { margin-top: 6px; line-height: 25px; text-align: center; white-space: nowrap; }
.tool .caret { margin-top: 3px; }
.col > div { height: 36px; display: flex; align-items: center; }
.col .caret { margin-left: 10px; }
.col span { margin-left: 7px; }

.t-line { width: 60px; margin-left: 2px; }
.t-poly { width: 66px; }
.t-circle { width: 76px; }
.t-arc { width: 60px; }
.t-dcol { margin-left: 7px; }
.t-move { margin-left: 11px; width: 106px; font-size: 16.600px; }
.t-mcol { margin-left: 20px; }
.t-mcol2 { margin-left: 19px; }
.t-text { width: 48px; margin-left: 10px; }
.t-dim { width: 88px; margin-left: 12px; }
.t-acol { margin-left: 10px; }
.t-acol .caret { margin-left: 9px; }
.t-lprop { width: 80px; margin-left: 8px; }
.layerbox { margin-left: 5px; padding-top: 1px; }
.t-ins { width: 56px; margin-left: 4px; }
.t-bcol { margin-left: 7px; }
.t-match { width: 82px; margin-left: 8px; }
.t-pcol { margin-left: 7px; width: 24px; }
.t-group { width: 54px; margin-left: 5px; }
.t-group svg { margin-left: 2px; }
.t-gcol { margin-left: 4px; }
.t-gcol > div { width: 34px; padding-left: 8px; }
.t-gcol .hot { height: 34px; background: linear-gradient(#7aa5d2, #4766a4); border: 2px solid #2f3b5c; padding-left: 6px; }
.t-meas { width: 70px; margin-left: 18px; }
.t-meas + .col { margin-left: 23px; }
.t-paste { width: 56px; margin-left: 12px; }
.t-paste + .col { margin-left: 17px; }
.t-base { width: 56px; margin-left: 18px; }
.t-base span { margin-top: 5px; }

.combo { display: flex; align-items: center; background: linear-gradient(#5a5a5a, #6d6d6d 50%, #505050); border: 2px solid #383838; white-space: nowrap; }
.layercombo { width: 312px; height: 33px; padding: 0 0 0 7px; }
.layercombo span { margin-left: 7px; flex: 1; }
.layercombo svg { margin-bottom: 2px; }
.swatch { width: 21px; height: 21px; margin: 2px 0 0 9px; background: #e63a0a; border: 2px solid #000; border-width: 2px 1px 0 2px; }
.icongrid { display: grid; grid-template-columns: repeat(5, 24px); gap: 12px; margin: 8px 0 0 6px; }
.combos { margin-left: 3px; padding-top: 1px; width: 206px; }
.combos .combo { height: 33px; margin-bottom: 3px; padding-right: 0; }
.combos .c-color { height: 34px; margin-bottom: 1px; padding: 1px 1px 0 18px; }
.combos span { flex: 1; }
.swatch2 { width: 24px; height: 24px; margin-right: 15px; background: #e63a0a; border: 1px solid #bbb; }
.hline { width: 96px; height: 2px; background: #fff; margin: -3px 3px 0; }

/* document tabs */
.doctabs { position: relative; display: flex; height: 43px; padding-left: 12px; background: linear-gradient(#383838 36px, #5a5a5a 36px); }
.dtab { position: relative; height: 36px; line-height: 45px; z-index: 1; }
.dtab svg { position: absolute; left: 8px; top: 4px; height: 32px; }
.dtab span { position: relative; }
.dtab.off { width: 176px; padding-left: 34px; color: #adadb5; }
.dtab.act { width: 222px; padding-left: 43px; z-index: 2; }
.dtab svg.x { left: 181px; top: 16px; }
.plus { margin-top: 11px; }

/* drawing area */
.work { display: flex; height: 1027px; background: #000; }
.viewport { position: relative; width: 2120px; background: #212830; }
.minor { stroke: #262d37; fill: none; }
.major { stroke: #2e3644; fill: none; }
.part { fill: none; stroke: #e03c0c; stroke-width: 1.200; }
.glow { stroke: #8a8983; stroke-width: 5; stroke-linecap: round; }
.cross { fill: none; stroke: #fff; stroke-width: 1.200; }
.compass text { font: bold 31px "Liberation Sans", sans-serif; fill: #b3b4b6; text-anchor: middle; }
.cubetext { font: bold 21px "Open Sans", sans-serif; fill: #55585e; text-anchor: middle; }
.wcs { font: 15px "Liberation Sans", sans-serif; fill: #4c4f53; }
.nav { fill: none; stroke: #42474c; stroke-width: 1.500; }
.vlabel { position: absolute; left: 1px; top: 6px; line-height: 24px; font-size: 17.400px; color: #e6e6e6; white-space: nowrap; }
.docbtns { position: absolute; right: 14px; top: 10px; display: flex; gap: 11px; }
.vscroll { width: 26px; background: #f0f0f0; display: flex; flex-direction: column; align-items: center; padding-top: 10px; border-left: 1px solid #fff; }
.vscroll svg, .hscroll > svg { fill: none; stroke: #555; stroke-width: 2.500; }
.vscroll b { width: 24px; height: 26px; margin: 617px 0 346px; background: #c9c9c9; flex: none; }
.hscroll { position: relative; height: 26px; width: 2146px; background: #f0f0f0; display: flex; align-items: center; padding-left: 5px; border-top: 1px solid #fff; box-shadow: 12px 0 0 #000; }
.hscroll b { width: 26px; height: 24px; margin-left: 9px; background: #c9c9c9; }
.hscroll .right { margin-left: 2052px; }

/* command line */
.cmd { position: absolute; left: 500px; top: -15px; width: 1161px; height: 40px; border: 2px solid #6c6c6c; border-radius: 5px; background: linear-gradient(#888, #444); display: flex; }
.cmdline { position: relative; flex: 1; background: #fff; border-radius: 3px; }
.cmdline .up { position: absolute; right: 4px; top: 15px; border: 6px solid transparent; border-top: 0; border-bottom-color: #111; }

/* layout tabs */
.layouttabs { display: flex; height: 30px; padding-left: 10px; border-top: 2px solid #555; background: #383838; }
.ltab { position: relative; width: 98px; height: 26px; line-height: 27px; text-align: center; color: #aeb0bd; font-size: 16.900px; }
.ltab svg { position: absolute; left: -4px; top: 0; }
.ltab span { position: relative; left: 3px; }
.ltab.act { width: 90px; z-index: 1; color: #fff; font-weight: bold; font-size: 16.300px; }
.ltab.act svg { left: 0; }
.ltab.act span { left: 5px; }
.plus2 { margin-left: 9px; }

/* status bar */
.status { display: flex; height: 40px; margin-left: 325px; background: #535353; border-top: 2px solid #606060; }
.cell { display: flex; align-items: center; height: 38px; border: 0 solid #858585; border-width: 2px 0 0 2px; padding-left: 4px; flex: none; white-space: nowrap; }
.cell.dbl { border-right-width: 2px; margin-right: 2px; }
.hl { width: 34px; height: 34px; flex: none; display: flex; align-items: center; justify-content: center; background: #5f92c4; }
.s-coord { width: 275px; padding-left: 26px; font-size: 17.200px; font-weight: 500; letter-spacing: -.1px; }
.s-model { width: 76px; padding-left: 5px; font-size: 17.300px; }
.s-grid { width: 98px; padding-left: 1px; }
.s-grid > svg { margin: 0 13px 0 7px; }
.s-a { width: 38px; padding-left: 6px; }
.s-b { width: 39px; padding-left: 7px; }
.s-c { width: 153px; padding-left: 5px; }
.s-c svg + svg { margin-left: 12px; }
.s-c .caret { margin-left: 10px; }
.s-c .caret + svg { margin-left: 13px; }
.s-c .caret:last-child { margin-left: 13px; }
.s-d { width: 96px; padding-left: 6px; }
.s-d .hl { margin: 0 6px 0 7px; }
.s-e { width: 38px; padding-left: 6px; }
.s-f { width: 38px; padding-left: 5px; }
.s-g { width: 38px; padding-left: 6px; }
.s-h { width: 62px; padding-left: 6px; }
.s-h .caret { margin-left: 11px; }
.s-i { width: 156px; padding-left: 1px; }
.s-i > svg { margin: 0 11px 0 7px; }
.s-i .caret + .hl { margin-left: 5px; }
.s-i .caret:last-child { margin-left: 6px; }
.s-j { width: 160px; padding-left: 1px; }
.s-j > svg { margin-left: 7px; }
.s-j > svg + svg { margin-left: 13px; }
.one { margin: 0 6px 0 14px; font-size: 17px; font-weight: 600; letter-spacing: -1px; }
.s-k { width: 60px; padding-left: 6px; }
.s-k .caret { margin-left: 11px; }
.s-l { width: 40px; padding-left: 6px; }
.s-m { width: 148px; padding-left: 12px; }
.dec { margin-left: 20px; width: 84px; font-weight: 600; font-size: 16.300px; }
.s-n { width: 40px; padding-left: 9px; }
.s-o { width: 60px; padding-left: 6px; }
.s-o .caret { margin-left: 11px; }
.s-p { width: 40px; padding-left: 6px; }
.s-q { width: 40px; padding-left: 1px; }
.s-r { width: 46px; padding-left: 5px; }
.s-s { flex: 1; padding-left: 6px; gap: 12px; }

/* taskbar */
.taskbar { display: flex; height: 60px; background: linear-gradient(90deg, #232426, #2a2726 15%, #2a2728 38%, #232529 55%, #2b2b2b 62%, #2b2b2c); }
.tk { position: relative; width: 75px; height: 60px; display: flex; align-items: center; justify-content: center; }
.tk.w1 { width: 72px; }
.tk.w2 { width: 73px; }
.tk.w3 { width: 77px; }
.tk.cur { background: linear-gradient(90deg, transparent 1px, #525252 1px, #525252 74px, transparent 74px); }
.tk.run::after, .tk.cur::after { content: ""; position: absolute; left: 7px; right: 7px; bottom: 0; height: 3px; background: #fb8f98; }
.tk.cur::after { left: 1px; right: 1px; }
.rl { position: absolute; color: #1f5fa8; font-size: 34px; line-height: 36px; }
.ps { width: 33px; height: 31px; margin-top: -3px; border-radius: 5px; background: #001e36; color: #31a8ff; font-weight: bold; font-size: 17px; line-height: 30px; text-align: center; }
.badge { position: absolute; left: 44px; top: 29px; width: 25px; height: 25px; border: 1px solid #aaa; border-radius: 50%; background: rgba(43, 43, 43, .8); font-size: 15.500px; font-weight: 600; line-height: 22px; text-align: center; }
.tray { margin-left: auto; display: flex; align-items: center; padding-right: 4px; width: 372px; }
.tray svg { fill: none; stroke: #fff; stroke-width: 1.300; }
.r2 { margin-left: 18px; }
.r3 { margin-left: 12px; }
.r4 { margin-left: 10px; }
.lang { margin-left: 16px; }
.clock { width: 96px; margin-left: 14px; text-align: center; line-height: 28px; font-size: 16.800px; }
.clock .date { font-size: 17.300px; }
.note { position: relative; margin: 0 0 0 22px; }
.note .badge { left: 11px; top: 11px; }

.watermark { position: absolute; left: 940px; top: 1280px; fill: #b9bcc6; fill-opacity: .42; }
.ar { font: bold 73px "DejaVu Sans", sans-serif; }
.en { font: 500 40px "Inter", "Open Sans", sans-serif; }
```
